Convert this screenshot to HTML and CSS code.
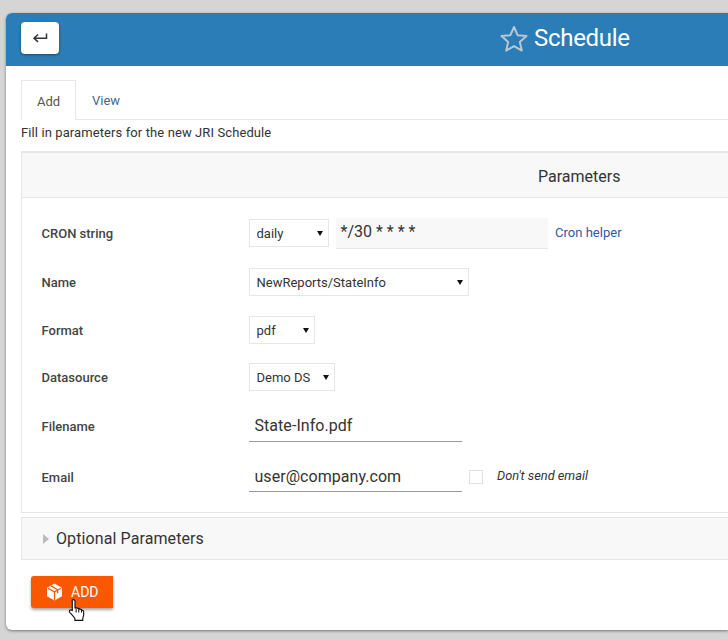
FILE: index.html
```html
<!DOCTYPE html>
<html lang="en">
<head>
	<meta charset="UTF-8">
	<title>Schedule</title>
	<link rel="stylesheet" href="styles.css">
</head>
<body>
	<div class="window">
		<div class="top_bar">
			<button class="back_btn">
				<svg width="16" height="12" viewBox="0 0 16 12"><path d="M14.500 1.500v4.700H2.500M6 2.500 2 6.200 6 9.900" fill="none" stroke="#333" stroke-width="1.500"/></svg>
			</button>
			<div class="title">
				<svg width="28" height="27" viewBox="0 0 28 27"><path d="M14 2l3.600 8.200 8.900.8-6.700 5.900 2 8.700L14 21.100 6.200 25.600l2-8.700L1.500 11l8.900-.8z" fill="none" stroke="#bcc6cc" stroke-width="2" stroke-linejoin="round"/></svg>
				<span>Schedule</span>
			</div>
		</div>

		<div class="content">
			<div class="tabs">
				<div class="tab active">Add</div>
				<div class="tab">View</div>
			</div>
			<div class="hint">Fill in parameters for the new JRI Schedule</div>

			<div class="panel">
				<div class="panel_head">Parameters</div>
				<div class="panel_body">
					<div class="row row_cron">
						<label>CRON string</label>
						<select class="sel_daily"><option>daily</option></select>
						<div class="cron_value">*/30 * * * *</div>
						<a class="cron_link">Cron helper</a>
					</div>
					<div class="row row_name">
						<label>Name</label>
						<select class="sel_name"><option>NewReports/StateInfo</option></select>
					</div>
					<div class="row row_format">
						<label>Format</label>
						<select class="sel_format"><option>pdf</option></select>
					</div>
					<div class="row row_ds">
						<label>Datasource</label>
						<select class="sel_ds"><option>Demo DS</option></select>
					</div>
					<div class="row row_file">
						<label>Filename</label>
						<input class="line_input" type="text" value="State-Info.pdf">
					</div>
					<div class="row row_email">
						<label>Email</label>
						<input class="line_input" type="text" value="user@company.com">
						<span class="check_box"></span>
						<em class="check_label">Don't send email</em>
					</div>
				</div>
			</div>

			<div class="optional">
				<span class="caret"></span>
				Optional Parameters
			</div>

			<div class="actions">
				<button class="add_btn">
					<svg width="17" height="18" viewBox="0 0 17 18"><path d="M8.500.5l7.500 4.200v8.600l-7.500 4.200L1 13.300V4.700z" fill="#fff"/><path d="M2 5.200l6.500 3.600 6.500-3.600M8.500 8.800v8M5 2.900l6.700 3.900v3.400" fill="none" stroke="#f95700" stroke-width="1.300"/></svg>
					ADD
				</button>
				<svg class="hand" width="19" height="25" viewBox="0 0 18 24"><path d="M5 1.500c1 0 1.600.7 1.600 1.700v6.500l1-.3c.8-.2 1.400.1 1.700.7.800-.3 1.500 0 1.800.7.900-.3 1.700.1 2 .9.800-.1 1.700.4 1.800 1.300.3 2.200.1 4.600-.8 6.500v2H6.500v-2C5 17.500 3.500 15.800 1.800 14c-.7-.8-.8-1.700-.2-2.200.7-.6 1.700-.3 2.400.4V3.200C3.400 2.200 4 1.500 5 1.500z" fill="#fff" stroke="#111" stroke-width="1.100" stroke-linejoin="round"/><path d="M7.700 10v4M10.200 10.300V14M12.800 11v3" stroke="#111" fill="none"/></svg>
			</div>
		</div>
	</div>
</body>
</html>
```

FILE: styles.css
```css
html, body{
	margin: 0;
	height: 100%;
	overflow: hidden;
}
body{
	background-color: #d5d5d5;
	font-family: Roboto, "Liberation Sans", sans-serif;
	color: #333;
}
/* the window runs off the right edge of the shot, so nothing has a right border */
.window{
	box-sizing: border-box;
	width: 722px;
	height: 617px;
	margin: 13px 0 0 6px;
	background-color: white;
	border-radius: 6px 0 0 6px;
	box-shadow: 0 1px 3px rgba(0, 0, 0, 0.45);
	overflow: hidden;
}
.top_bar{
	position: relative;
	display: flex;
	align-items: center;
	height: 53px;
	padding-left: 494px;
	background-color: #2a7db7;
}
.back_btn{
	position: absolute;
	left: 15px;
	top: 9px;
	width: 38px;
	height: 32px;
	padding: 0;
	border: none;
	border-radius: 4px;
	background-color: white;
	box-shadow: 0 1px 3px rgba(0, 0, 0, 0.4);
	display: flex;
	align-items: center;
	justify-content: center;
}
.title{
	display: flex;
	align-items: center;
	gap: 6px;
	margin-top: -3px;
	color: white;
	font-size: 24px;
	letter-spacing: -0.3px;
}
.content{
	padding: 14px 0 0 15px;
}
.tabs{
	display: flex;
	height: 40px;
	box-sizing: border-box;
	border-bottom: 1px solid #e6e6e6;
}
.tab{
	height: 40px;
	box-sizing: border-box;
	padding: 13px 16px 0;
	font-size: 13px;
	color: #42688f;
}
.tab.active{
	width: 55px;
	padding-left: 15px;
	border: 1px solid #e6e6e6;
	border-bottom: none;
	background-color: white;
	color: #555;
}
.hint{
	height: 31px;
	padding-top: 5px;
	box-sizing: border-box;
	font-size: 13px;
	letter-spacing: 0.1px;
}
.panel{
	border: 1px solid #e6e6e6;
	border-top-width: 2px;
	border-right: none;
}
.panel_head{
	height: 45px;
	line-height: 47px;
	box-sizing: border-box;
	padding-left: 516px;
	border-bottom: 1px solid #e6e6e6;
	background-color: #f8f8f8;
	font-size: 16px;
}
.panel_body{
	height: 314px;
	box-sizing: border-box;
	padding-top: 20px;
}
.row{
	display: flex;
	align-items: center;
	padding-left: 20px;
}
.row label{
	width: 207px;
	flex: none;
	margin-left: -0.5px;
	margin-right: 0.5px;
	font-size: 13px;
	font-weight: 500;
	color: #444;
}
.row select{
	appearance: none;
	height: 28px;
	box-sizing: border-box;
	padding: 0 0 0 6.500px;
	border: 1px solid #e6e6e6;
	border-radius: 0;
	background-color: white;
	background-image: url("data:image/svg+xml,%3Csvg xmlns='http://www.w3.org/2000/svg' width='6' height='5'%3E%3Cpath d='M0 0h6L3 5z' fill='%23111'/%3E%3C/svg%3E");
	background-repeat: no-repeat;
	background-position: right 5px center;
	font-family: Roboto, "Liberation Sans", sans-serif;
	font-size: 13px;
	color: #333;
}
.row_cron{ height: 30px; }
.row_name{ height: 28px; margin-top: 20px; }
.row_format{ height: 28px; margin-top: 20px; }
.row_ds{ height: 28px; margin-top: 19px; }
.row_file{ height: 31px; margin-top: 20px; }
.row_email{ height: 30px; margin-top: 20px; }
.sel_daily{ width: 80px; }
.sel_name{ width: 220px; }
.sel_format{ width: 66px; }
.sel_ds{ width: 86px; }
.cron_value{
	width: 212px;
	height: 31px;
	box-sizing: border-box;
	margin-left: 7px;
	padding: 4px 5px 0 4.500px;
	border-bottom: 1px solid #e6e6e6;
	background-color: #f8f8f8;
	font-size: 16px;
}
.cron_link{
	margin-left: 7px;
	margin-top: -1px;
	font-size: 13px;
	letter-spacing: 0.02px;
	color: #2a5ca8;
}
.line_input{
	width: 213px;
	height: 100%;
	box-sizing: border-box;
	padding: 0 5.500px 2px;
	border: none;
	border-bottom: 1px solid #999;
	outline: none;
	font-family: Roboto, "Liberation Sans", sans-serif;
	font-size: 16px;
	letter-spacing: 0.05px;
	color: #333;
}
.row_email .line_input{
	padding-bottom: 0;
}
.check_box{
	width: 14px;
	height: 14px;
	box-sizing: border-box;
	margin-left: 7px;
	border: 1px solid #e0e0e0;
}
.check_label{
	margin-left: 14px;
	margin-top: -3px;
	font-size: 12.800px;
}
.optional{
	display: flex;
	align-items: center;
	height: 43px;
	box-sizing: border-box;
	margin-top: 4px;
	padding-left: 21px;
	border: 1px solid #e6e6e6;
	border-right: none;
	background-color: #f8f8f8;
	font-size: 16px;
	letter-spacing: 0.1px;
}
.caret{
	width: 0;
	height: 0;
	margin-right: 7px;
	border-left: 6px solid #bbb;
	border-top: 5.500px solid transparent;
	border-bottom: 5.500px solid transparent;
}
.actions{
	position: relative;
	padding: 16px 0 0 10px;
}
.add_btn{
	display: flex;
	align-items: center;
	gap: 8px;
	width: 82px;
	height: 32px;
	box-sizing: border-box;
	padding: 0 0 0 15px;
	border: none;
	border-radius: 3px 0 0 3px;
	background-color: #f95700;
	box-shadow: 0 2px 3px rgba(0, 0, 0, 0.35);
	font-family: Roboto, "Liberation Sans", sans-serif;
	font-size: 14px;
	color: white;
}
.hand{
	position: absolute;
	left: 47px;
	top: 38px;
}
```
